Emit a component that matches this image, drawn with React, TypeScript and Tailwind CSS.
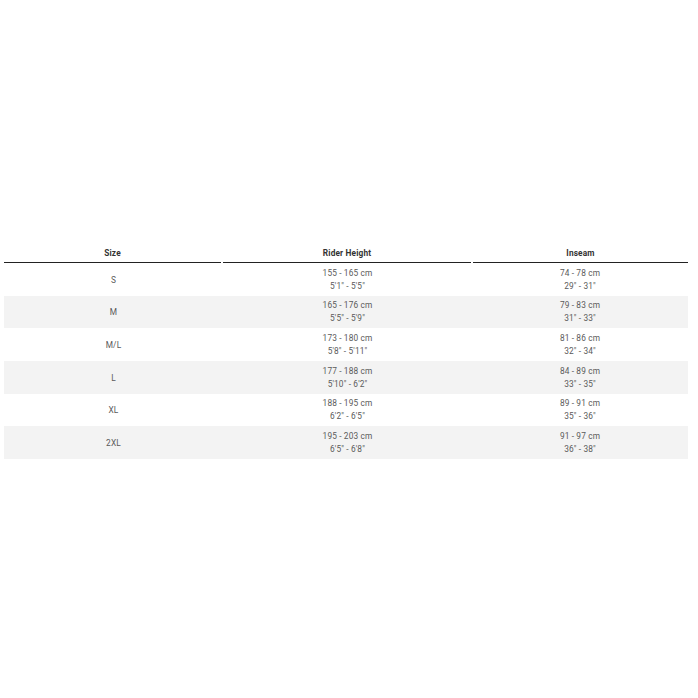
const rows = [
  { size: 'S', height: ['155 - 165 cm', '5\'1" - 5\'5"'], inseam: ['74 - 78 cm', '29" - 31"'] },
  { size: 'M', height: ['165 - 176 cm', '5\'5" - 5\'9"'], inseam: ['79 - 83 cm', '31" - 33"'] },
  { size: 'M/L', height: ['173 - 180 cm', '5\'8" - 5\'11"'], inseam: ['81 - 86 cm', '32" - 34"'] },
  { size: 'L', height: ['177 - 188 cm', '5\'10" - 6\'2"'], inseam: ['84 - 89 cm', '33" - 35"'] },
  { size: 'XL', height: ['188 - 195 cm', '6\'2" - 6\'5"'], inseam: ['89 - 91 cm', '35" - 36"'] },
  { size: '2XL', height: ['195 - 203 cm', '6\'5" - 6\'8"'], inseam: ['91 - 97 cm', '36" - 38"'] },
];

function Cell({ lines }: { lines: string[] }) {
  return (
    <div className="flex flex-col items-center justify-center pt-[1px]">
      {lines.map((l, i) => (
        <span key={i} className="leading-[13px]">
          {l}
        </span>
      ))}
    </div>
  );
}

export default function App() {
  return (
    <div className="w-[698px] h-[698px] bg-white font-['Roboto',sans-serif] text-[8.3px] tracking-[0.15px] text-[#5a5a5a]">
      <div className="pt-[244px] pl-[4px] w-[688px]">
        {/* header */}
        <div className="grid grid-cols-[217px_248px_215px] gap-x-[2px] font-bold text-[#333]">
          <div className="h-[19px] flex items-center justify-center border-b border-[#222]">Size</div>
          <div className="h-[19px] flex items-center justify-center border-b border-[#222]">Rider Height</div>
          <div className="h-[19px] flex items-center justify-center border-b border-[#222]">Inseam</div>
        </div>

        {rows.map((r, idx) => (
          <div
            key={r.size}
            className={`grid grid-cols-[219px_249px_216px] h-[32.67px] ${idx % 2 === 1 ? 'bg-[#f3f3f3]' : 'bg-white'}`}
          >
            <div className="flex items-center justify-center pt-[1px]">{r.size}</div>
            <Cell lines={r.height} />
            <Cell lines={r.inseam} />
          </div>
        ))}
      </div>
    </div>
  );
}
